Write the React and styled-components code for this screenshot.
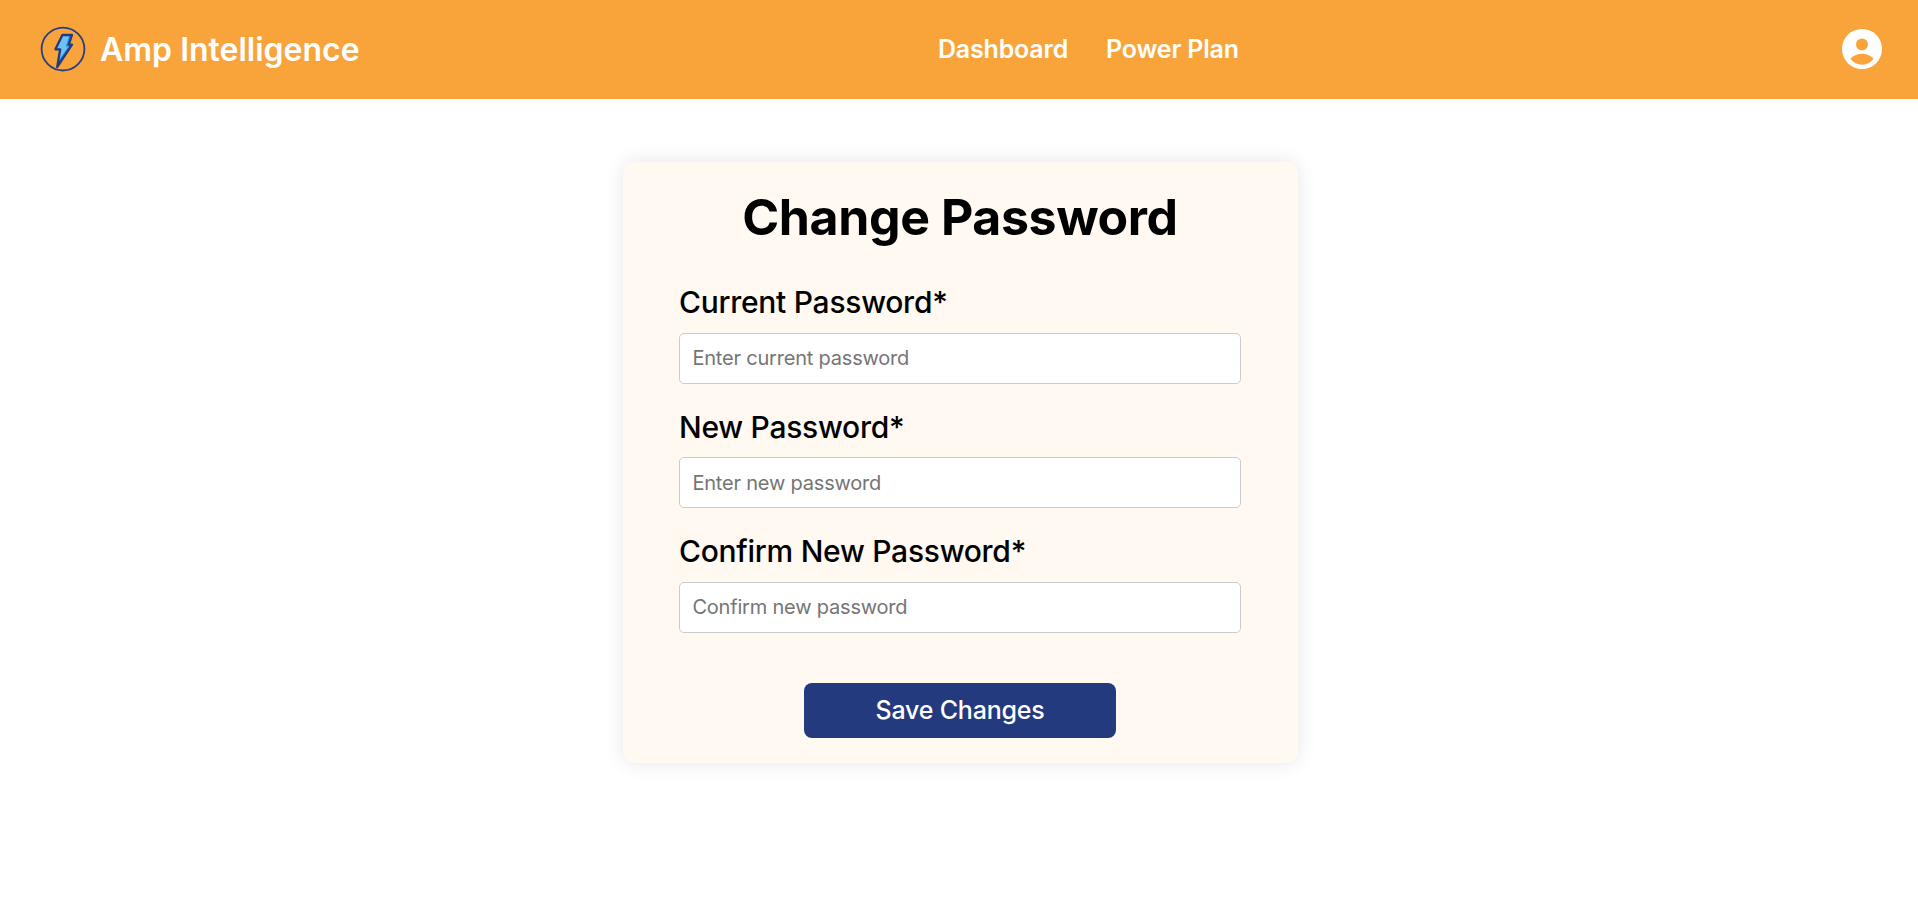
import React from "react";
import styled, { createGlobalStyle } from "styled-components";

const GlobalStyle = createGlobalStyle`
  *, *::before, *::after { box-sizing: border-box; }
  body {
    margin: 0;
    background: #fff;
    color: #000;
    font-family: Inter, "Liberation Sans", sans-serif;
  }
`;

const Page = styled.div`
  min-height: 100vh;
  background: #fff;
`;

const Header = styled.header`
  display: grid;
  grid-template-columns: 938px 1fr auto;
  align-items: center;
  height: 99px;
  padding: 0 32px 1px 0;
  background: #f9a43a;
  color: #fff;
`;

const Brand = styled.a`
  display: flex;
  align-items: center;
  gap: 14px;
  padding-left: 40px;
  white-space: nowrap;
`;

const BrandName = styled.span`
  padding-top: 2px;
  font-size: 32px;
  font-weight: 600;
  line-height: 40px;
`;

const Logo = styled.svg`
  width: 46px;
  height: 46px;
`;

const Nav = styled.nav`
  display: flex;
  gap: 38px;
`;

const NavLink = styled.a`
  font-size: 25px;
  font-weight: 600;
  letter-spacing: -0.2px;
  line-height: 30px;
  white-space: nowrap;
`;

const Profile = styled.a`
  display: flex;
`;

const ProfileIcon = styled.svg`
  width: 48px;
  height: 48px;
`;

const Main = styled.main`
  display: flex;
  justify-content: center;
  padding: 63px 0 40px 3px;
`;

const Card = styled.form`
  display: flex;
  flex-direction: column;
  width: 675px;
  height: 601px;
  padding: 24px 57px 25px 56px;
  border-radius: 12px;
  background: #fff9f2;
  box-shadow: 0 0 20px rgba(0, 0, 0, 0.1);
`;

const Title = styled.h1`
  margin: 0 0 33px;
  font-size: 50px;
  font-weight: 700;
  letter-spacing: -0.4px;
  line-height: 62px;
  text-align: center;
`;

const Field = styled.div`
  display: flex;
  flex-direction: column;
  height: 124.4px;
`;

const Label = styled.label`
  margin-bottom: 9.8px;
  padding-top: 0.2px;
  font-size: 30px;
  font-weight: 500;
  letter-spacing: -0.27px;
  line-height: 42px;
`;

const Input = styled.input`
  width: 100%;
  height: 51px;
  padding: 0 12px 0.6px 12.4px;
  border: 1px solid #ccc;
  border-radius: 5px;
  background: #fff;
  font-family: inherit;
  font-size: 20px;
  letter-spacing: -0.2px;
  &::placeholder { color: #757575; }
`;

const SaveButton = styled.button`
  align-self: center;
  width: 312px;
  height: 55px;
  margin-top: auto;
  padding: 0 0 1px;
  border: 0;
  border-radius: 8px;
  background: #243a7e;
  color: #fff;
  font-family: inherit;
  font-size: 25px;
  font-weight: 500;
  letter-spacing: -0.2px;
`;

const fields = [
  { id: "current", label: "Current Password*", placeholder: "Enter current password" },
  { id: "new", label: "New Password*", placeholder: "Enter new password" },
  { id: "confirm", label: "Confirm New Password*", placeholder: "Confirm new password" },
];

function BoltLogo() {
  const bolt = "M22.4 9H32L28.8 18.7H32L17.2 41L20.2 23.3H15.4Z";
  return (
    <Logo viewBox="0 0 46 46" fill="none" aria-hidden="true">
      <circle cx="23" cy="23.1" r="21.4" stroke="#2b3d80" strokeWidth="1.8" />
      <path d={bolt} fill="#6ec1f4" />
      <path d="M29.5 9H32L28.8 18.7H32L17.2 41L18.2 35.5L28.4 20.6H25.8Z" fill="#168fdb" />
      <path d={bolt} stroke="#243a7e" strokeWidth="2.3" strokeLinejoin="round" />
    </Logo>
  );
}

function AccountIcon() {
  return (
    <ProfileIcon viewBox="0 0 24 24" aria-hidden="true">
      <circle cx="12" cy="12" r="10" fill="#fff" />
      <circle cx="12" cy="9.7" r="3" fill="#f9a43a" />
      <path d="M6.2 16.8C7.8 15.2 9.9 14.4 12 14.4S16.2 15.2 17.8 16.8C16.4 18.9 14.3 19.9 12 19.9S7.6 18.9 6.2 16.8Z" fill="#f9a43a" />
    </ProfileIcon>
  );
}

export default function App() {
  return (
    <Page>
      <GlobalStyle />
      <Header>
        <Brand>
          <BoltLogo />
          <BrandName>Amp Intelligence</BrandName>
        </Brand>
        <Nav>
          <NavLink>Dashboard</NavLink>
          <NavLink>Power Plan</NavLink>
        </Nav>
        <Profile aria-label="Account"><AccountIcon /></Profile>
      </Header>
      <Main>
        <Card>
          <Title>Change Password</Title>
          {fields.map((field) => (
            <Field key={field.id}>
              <Label htmlFor={field.id}>{field.label}</Label>
              <Input id={field.id} type="password" placeholder={field.placeholder} />
            </Field>
          ))}
          <SaveButton type="button">Save Changes</SaveButton>
        </Card>
      </Main>
    </Page>
  );
}
